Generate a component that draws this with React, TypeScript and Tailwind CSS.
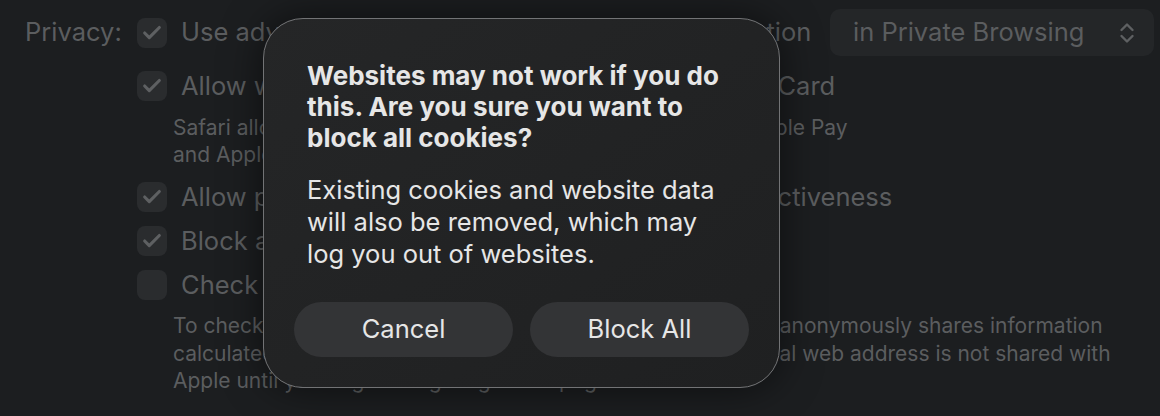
import { Check } from "lucide-react";

function Box({ checked }: { checked: boolean }) {
  return (
    <div className="w-[30px] h-[30px] rounded-[8px] bg-[#2a2c2e] flex items-center justify-center shrink-0">
      {checked && <Check size={22} strokeWidth={3.4} className="text-[#5e6062]" />}
    </div>
  );
}

function Row({ checked, children }: { checked: boolean; children: React.ReactNode }) {
  return (
    <div className="h-[44px] flex items-center gap-[14px]">
      <Box checked={checked} />
      <span className="whitespace-nowrap">{children}</span>
    </div>
  );
}

export default function App() {
  return (
    <div
      className="relative w-[1160px] h-[416px] overflow-hidden bg-[#1c1e20] text-[#5b5d5f] text-[25.5px]"
      style={{ fontFamily: "Inter, 'Noto Sans', sans-serif" }}
    >
      {/* Settings behind the sheet */}
      <div className="flex pl-[25px] pt-[8px]">
        <div className="w-[112px] shrink-0 h-[49px] flex items-center">Privacy:</div>
        <div className="flex flex-col flex-1 min-w-0 pr-[6px]">
          <div className="flex items-center justify-between h-[49px]">
            <div className="flex items-center gap-[14px]">
              <Box checked />
              <span className="whitespace-nowrap">Use advanced tracking and fingerprinting protection</span>
            </div>
            <div className="w-[324px] shrink-0 h-[47px] rounded-[10px] bg-[#242628] flex items-center justify-between pl-[23px] pr-[19px]">
              <span>in Private Browsing</span>
              <svg width="16" height="24" viewBox="0 0 16 24" fill="none" stroke="#5e6062" strokeWidth="2.4" strokeLinecap="round" strokeLinejoin="round">
                <path d="M2.5 9 8 3.5 13.5 9" />
                <path d="M2.5 15 8 20.5 13.5 15" />
              </svg>
            </div>
          </div>
          <div className="mt-[7px]">
            <Row checked>Allow websites to check for Apple Pay and Apple Card</Row>
          </div>
          <div className="ml-[36px] text-[21px] leading-[27px] mt-[6px] mb-[7px] whitespace-nowrap">
            <div>Safari allows websites to check if Apple Pay is set up and Apple Pay</div>
            <div>and Apple Card accounts on this Mac.</div>
          </div>
          <Row checked>Allow privacy-preserving measurement of ad effectiveness</Row>
          <Row checked>Block all cookies</Row>
          <Row checked={false}>Check websites for fraud before visiting</Row>
          <div className="ml-[36px] text-[21px] leading-[27.5px] mt-[5px] whitespace-nowrap">
            <div>To check if a website might be fraudulent, Safari on this Mac anonymously shares information</div>
            <div>calculated from the full website address with Apple. The actual web address is not shared with</div>
            <div>Apple until you begin navigating to the page.</div>
          </div>
        </div>
      </div>

      {/* Confirmation sheet */}
      <div className="absolute left-[263px] top-[18px] w-[517px] h-[370px] rounded-[40px] border border-[#727375] bg-gradient-to-br from-[#252627] to-[#1f2021] shadow-[0_0_40px_rgba(0,0,0,0.55)] flex flex-col px-[30px] pt-[41px] pb-[30px]">
        <div className="px-[13px] text-[#e6e6e6] whitespace-nowrap">
          <div className="font-bold text-[26px] leading-[31px]">
            Websites may not work if you do
            <br />
            this. Are you sure you want to
            <br />
            block all cookies?
          </div>
          <div className="mt-[21px] leading-[32px]">
            Existing cookies and website data
            <br />
            will also be removed, which may
            <br />
            log you out of websites.
          </div>
        </div>
        <div className="mt-auto flex gap-[17px]">
          <button className="flex-1 h-[55px] rounded-full bg-[#333436] text-[#e6e6e6]">Cancel</button>
          <button className="flex-1 h-[55px] rounded-full bg-[#333436] text-[#e6e6e6]">Block All</button>
        </div>
      </div>
    </div>
  );
}
